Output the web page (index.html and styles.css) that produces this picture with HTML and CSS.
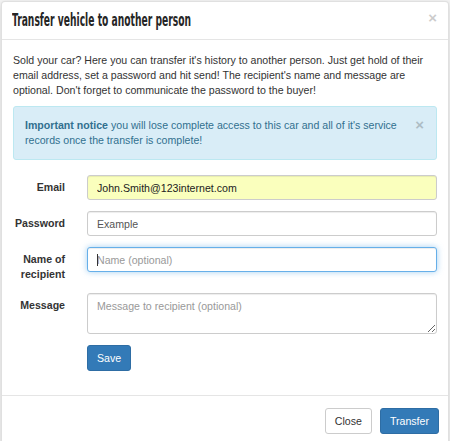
FILE: index.html
```html
<!DOCTYPE html>
<html lang="en">
<head>
    <meta charset="UTF-8">
    <meta name="viewport" content="width=device-width, initial-scale=1.0">
    <title>Transfer vehicle to another person</title>
    <link rel="stylesheet" href="styles.css">
</head>
<body>
    <div class="modal">
        <div class="modal-header">
            <h4 class="modal-title">Transfer vehicle to another person</h4>
            <button class="close header-close" type="button">&times;</button>
        </div>
        <div class="modal-body">
            <p class="intro">Sold your car? Here you can transfer it's history to another person. Just get hold of their email address, set a password and hit send! The recipient's name and message are optional. Don't forget to communicate the password to the buyer!</p>
            <div class="alert">
                <p class="alert-text"><strong>Important notice</strong> you will lose complete access to this car and all of it's service records once the transfer is complete!</p>
                <button class="close alert-close" type="button">&times;</button>
            </div>
            <form class="form-horizontal">
                <label for="email">Email</label>
                <input type="email" id="email" class="form-control autofilled" value="John.Smith@123internet.com">

                <label for="password">Password</label>
                <input type="text" id="password" class="form-control" value="Example">

                <label for="name">Name of recipient</label>
                <div class="caret-wrap">
                    <input type="text" id="name" class="form-control focused" placeholder="Name (optional)">
                    <span class="caret"></span>
                </div>

                <label for="message">Message</label>
                <textarea id="message" class="form-control" placeholder="Message to recipient (optional)"></textarea>

                <span></span>
                <div><button type="button" class="btn btn-primary">Save</button></div>
            </form>
        </div>
        <div class="modal-footer">
            <button type="button" class="btn btn-default">Close</button>
            <button type="button" class="btn btn-primary">Transfer</button>
        </div>
    </div>
</body>
</html>
```

FILE: styles.css
```css
body {
    margin: 0;
    background-color: #f4f4f4;
    font-family: "Liberation Sans", Arial, sans-serif;
    font-size: 10.6px;
    line-height: 15px;
    color: #333;
}
.modal {
    margin: 1px 0 0 1px;
    width: 446px;
    background-color: #fff;
    border: 1px solid rgba(0, 0, 0, 0.12);
    border-radius: 4px;
    box-shadow: 0 2px 6px rgba(0, 0, 0, 0.15);
}
.modal-header {
    height: 37px;
    padding: 0 11px 0 10px;
    display: flex;
    align-items: center;
    justify-content: space-between;
    border-bottom: 1px solid #e5e5e5;
}
.modal-title {
    margin: 0;
    display: inline-block;
    font-family: "DejaVu Sans Condensed", "Liberation Sans", sans-serif;
    font-stretch: condensed;
    font-size: 17px;
    font-weight: bold;
    color: #262626;
    transform: scaleX(0.6);
    transform-origin: left center;
    white-space: nowrap;
}
.close {
    padding: 0;
    border: none;
    background: none;
    font-family: "Liberation Sans", Arial, sans-serif;
    font-size: 15px;
    font-weight: bold;
    line-height: 1;
    color: #000;
    opacity: 0.2;
    cursor: pointer;
}
.header-close {
    margin-bottom: 6px;
}
.modal-body {
    padding: 13px 11px 0 11px;
}
.intro {
    margin: 0 0 8px 0;
}
.alert {
    display: flex;
    justify-content: space-between;
    align-items: flex-start;
    padding: 11px 12px 11px 11px;
    margin-bottom: 15px;
    background-color: #d9edf7;
    border: 1px solid #bce8f1;
    border-radius: 3px;
    color: #31708f;
}
.alert-text {
    margin: 0;
    max-width: 385px;
}
.alert-close {
    margin-top: -1px;
}
.form-horizontal {
    display: grid;
    grid-template-columns: 52px 1fr;
    column-gap: 22px;
    row-gap: 11px;
    align-items: start;
}
.form-horizontal label {
    padding-top: 5px;
    text-align: right;
    font-weight: bold;
}
.form-control {
    display: block;
    width: 100%;
    box-sizing: border-box;
    height: 25px;
    padding: 0 9px;
    font-family: "Liberation Sans", Arial, sans-serif;
    font-size: 10.6px;
    color: #555;
    background-color: #fff;
    border: 1px solid #ccc;
    border-radius: 3px;
    box-shadow: inset 0 1px 1px rgba(0, 0, 0, 0.075);
    outline: none;
}
.form-control::placeholder {
    color: #999;
}
.autofilled {
    background-color: #faffbd;
    color: #222;
}
.focused {
    border-color: #66afe9;
    box-shadow: inset 0 1px 1px rgba(0, 0, 0, 0.075), 0 0 6px rgba(102, 175, 233, 0.6);
}
.caret-wrap {
    position: relative;
}
.caret {
    position: absolute;
    left: 10px;
    top: 7px;
    width: 1px;
    height: 12px;
    background-color: #333;
}
textarea.form-control {
    height: 41px;
    padding: 5px 9px;
    line-height: 15px;
}
.btn {
    height: 26px;
    padding: 0 9px;
    font-family: "Liberation Sans", Arial, sans-serif;
    font-size: 10.6px;
    border: 1px solid transparent;
    border-radius: 3px;
    cursor: pointer;
}
.btn-primary {
    color: #fff;
    background-color: #337ab7;
    border-color: #2e6da4;
}
.btn-default {
    color: #333;
    background-color: #fff;
    border-color: #ccc;
}
.modal-footer {
    margin-top: 24px;
    padding: 12px 9px 11px 11px;
    display: flex;
    justify-content: flex-end;
    gap: 8px;
    border-top: 1px solid #e5e5e5;
}
```
